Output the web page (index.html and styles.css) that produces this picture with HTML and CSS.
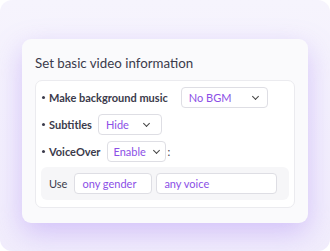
FILE: index.html
```html
<!DOCTYPE html>
<html>
<head>
    <meta charset="utf-8">
    <title>Video info</title>
    <link rel="stylesheet" href="styles.css">
</head>
<body>
    <div class="scene">
        <div class="card">
            <div class="title">Set basic video information</div>
            <div class="panel">
                <div class="row row-music">
                    <span class="dot"></span>
                    <span class="label">Make background music</span>
                    <div class="select sel-music"><span>No BGM</span><span class="chev"></span></div>
                </div>
                <div class="row row-sub">
                    <span class="dot"></span>
                    <span class="label">Subtitles</span>
                    <div class="select sel-sub"><span>Hide</span><span class="chev"></span></div>
                </div>
                <div class="row row-voice">
                    <span class="dot"></span>
                    <span class="label">VoiceOver</span>
                    <div class="select sel-voice"><span>Enable</span><span class="chev"></span></div>
                    <span class="colon">:</span>
                </div>
                <div class="use">
                    <span class="use-label">Use</span>
                    <div class="field f-gender">ony gender</div>
                    <div class="field f-voice">any voice</div>
                </div>
            </div>
        </div>
    </div>
</body>
</html>
```
FILE: styles.css
```css
* {
    box-sizing: border-box;
}

body {
    margin: 0;
    background: #ffffff;
    font-family: Lato, "Noto Sans", sans-serif;
}

.scene {
    width: 330px;
    height: 251px;
    border-radius: 12px;
    background: linear-gradient(180deg, #f6f4fd 0%, #f1edfc 100%);
    padding: 39px 22px 0 22px;
    overflow: hidden;
}

.card {
    width: 286px;
    height: 184px;
    background: #fafafc;
    border-radius: 9px;
    box-shadow: 0 10px 28px rgba(160, 120, 245, 0.38);
    padding: 14px 13px 0 13px;
}

.title {
    font-size: 13.3px;
    color: #3b3b4b;
    height: 27px;
    line-height: 20px;
}

.panel {
    background: #ffffff;
    border: 1px solid #ebebef;
    border-radius: 7px;
    height: 128px;
    padding: 7px 5px 0 5px;
}

.row {
    display: flex;
    align-items: center;
    height: 21px;
    margin-bottom: 6px;
}

.row-music {
    margin-top: -1px;
}

.dot {
    width: 3px;
    height: 3px;
    border-radius: 50%;
    background: #3b3b4b;
    margin: 0 4px 0 1px;
}

.label {
    font-weight: 700;
    font-size: 11px;
    color: #3b3b4b;
}

.select {
    display: flex;
    align-items: center;
    justify-content: space-between;
    height: 21px;
    border: 1px solid #dedee4;
    border-radius: 4px;
    background: #ffffff;
    color: #8b4fe6;
    font-size: 11px;
    padding: 0 9px 0 7px;
}

.chev {
    width: 5px;
    height: 5px;
    border-right: 1.3px solid #444;
    border-bottom: 1.3px solid #444;
    transform: rotate(45deg);
    margin-top: -3px;
}

.sel-music {
    width: 87px;
    margin-left: 13px;
}

.sel-sub {
    width: 64px;
    margin-left: 6px;
    padding-right: 12px;
}

.sel-voice {
    width: 59px;
    margin-left: 7px;
    padding-right: 6px;
    padding-left: 5px;
}

.colon {
    font-size: 11px;
    color: #3b3b4b;
    margin-left: 1px;
}

.use {
    display: flex;
    align-items: center;
    background: #f6f6f8;
    border-radius: 6px;
    height: 33px;
    margin-top: -1px;
    padding: 0 10px 0 8px;
}

.use-label {
    font-size: 11px;
    color: #3b3b4b;
    margin-right: 7px;
}

.field {
    height: 21px;
    border: 1px solid #dedee4;
    border-radius: 4px;
    background: #ffffff;
    color: #8b4fe6;
    font-size: 11px;
    line-height: 19px;
    padding: 0 7px;
}

.f-gender {
    width: 78px;
}

.f-voice {
    width: 121px;
    margin-left: 4px;
}
```
